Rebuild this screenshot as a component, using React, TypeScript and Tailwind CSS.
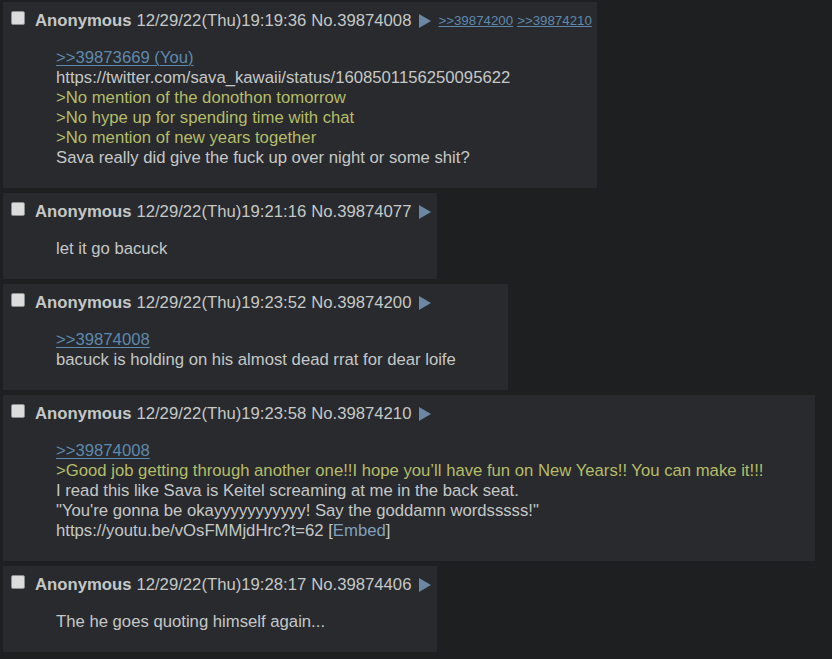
import React from "react";

type Seg = { t: string; c?: "link" | "green" | "embed" };
type Line = Seg[];
type Post = {
  w: string;
  time: string;
  no: string;
  backlinks?: string[];
  lines: Line[];
};

const posts: Post[] = [
  {
    w: "w-[594px]",
    time: "12/29/22(Thu)19:19:36",
    no: "39874008",
    backlinks: [">>39874200", ">>39874210"],
    lines: [
      [{ t: ">>39873669 (You)", c: "link" }],
      [{ t: "https://twitter.com/sava_kawaii/status/1608501156250095622" }],
      [{ t: ">No mention of the donothon tomorrow", c: "green" }],
      [{ t: ">No hype up for spending time with chat", c: "green" }],
      [{ t: ">No mention of new years together", c: "green" }],
      [{ t: "Sava really did give the fuck up over night or some shit?" }],
    ],
  },
  {
    w: "w-[434px]",
    time: "12/29/22(Thu)19:21:16",
    no: "39874077",
    lines: [[{ t: "let it go bacuck" }]],
  },
  {
    w: "w-[505px]",
    time: "12/29/22(Thu)19:23:52",
    no: "39874200",
    lines: [
      [{ t: ">>39874008", c: "link" }],
      [{ t: "bacuck is holding on his almost dead rrat for dear loife" }],
    ],
  },
  {
    w: "w-[812px]",
    time: "12/29/22(Thu)19:23:58",
    no: "39874210",
    lines: [
      [{ t: ">>39874008", c: "link" }],
      [
        {
          t: ">Good job getting through another one!!I hope you\u2019ll have fun on New Years!! You can make it!!!",
          c: "green",
        },
      ],
      [{ t: "I read this like Sava is Keitel screaming at me in the back seat." }],
      [{ t: "\"You're gonna be okayyyyyyyyyyy! Say the goddamn wordsssss!\"" }],
      [
        { t: "https://youtu.be/vOsFMMjdHrc?t=62 [" },
        { t: "Embed", c: "embed" },
        { t: "]" },
      ],
    ],
  },
  {
    w: "w-[434px]",
    time: "12/29/22(Thu)19:28:17",
    no: "39874406",
    lines: [[{ t: "The he goes quoting himself again..." }]],
  },
];

function Seg({ s }: { s: Seg }) {
  if (s.c === "link")
    return <span className="text-[#5f89ac] underline decoration-1 underline-offset-2">{s.t}</span>;
  if (s.c === "green") return <span className="text-[#b5bd68]">{s.t}</span>;
  if (s.c === "embed") return <span className="text-[#81a2be]">{s.t}</span>;
  return <span>{s.t}</span>;
}

function PostBox({ p }: { p: Post }) {
  return (
    <div className={`${p.w} bg-[#282a2e] pt-[9px] pb-[20px]`}>
      <div className="flex items-center h-[20px] pl-[8px] whitespace-nowrap">
        <span className="w-[14px] h-[14px] rounded-[2px] bg-[#dcdcdc] border border-[#8e8e8e] mr-[10px] -mt-[6px]" />
        <span className="font-bold">Anonymous</span>
        <span className="ml-[5px]">{p.time}</span>
        <span className="ml-[5px]">No.{p.no}</span>
        <svg className="ml-[8px] -mt-[1px]" width="12" height="14" viewBox="0 0 12 14">
          <polygon points="0,0 12,7 0,14" fill="#6b87a4" />
        </svg>
        {p.backlinks && (
          <span className="ml-[7px] flex gap-[4px] text-[13.3px]">
            {p.backlinks.map((b) => (
              <span key={b} className="text-[#5f89ac] underline decoration-1 underline-offset-1">
                {b}
              </span>
            ))}
          </span>
        )}
      </div>
      <div className="mt-[17px] pl-[53px] whitespace-nowrap">
        {p.lines.map((l, i) => (
          <div key={i} className="h-[20px] leading-[20px]">
            {l.map((s, j) => (
              <Seg key={j} s={s} />
            ))}
          </div>
        ))}
      </div>
    </div>
  );
}

export default function App() {
  return (
    <div
      className="min-h-screen bg-[#1d1f21] text-[#c5c8c6] text-[16.7px] pl-[3px] pt-[2px] flex flex-col gap-[5px] leading-[20px]"
      style={{ fontFamily: '"Liberation Sans", Arial, sans-serif' }}
    >
      {posts.map((p) => (
        <PostBox key={p.no} p={p} />
      ))}
    </div>
  );
}
